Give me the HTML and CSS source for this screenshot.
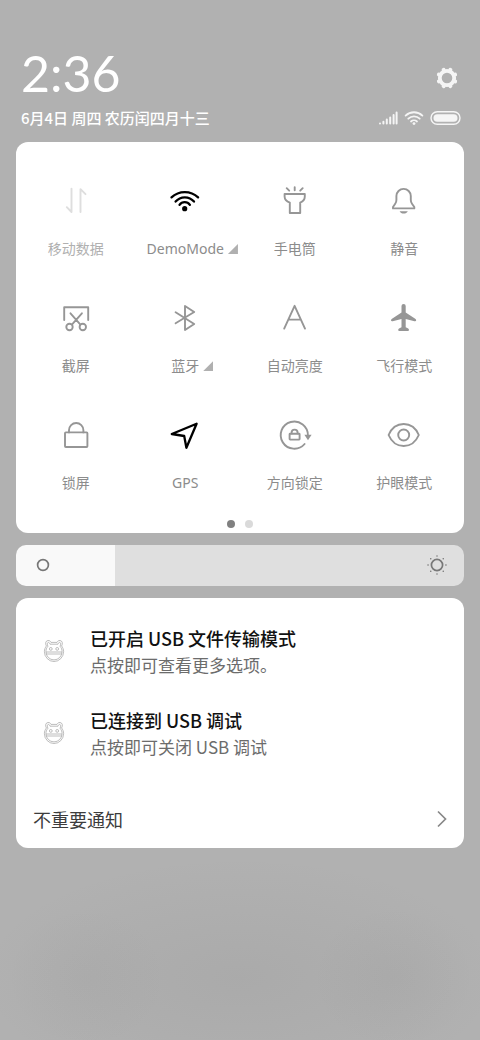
FILE: index.html
```html
<!DOCTYPE html>
<html lang="zh-CN">
<head>
<meta charset="utf-8">
<meta name="viewport" content="width=device-width, initial-scale=1">
<title>控制中心</title>
<link rel="stylesheet" href="styles.css">
</head>
<body>
<main class="shade">
  <header class="header">
    <div class="header-row">
      <time class="clock">2:36</time>
      <button class="settings" type="button" aria-label="设置">
        <svg width="24" height="24" viewBox="0 0 24 24" fill="none" stroke="#f5f5f5">
          <circle cx="12" cy="12" r="7.2" stroke-width="3.8"/>
          <g stroke-width="4" stroke-linecap="round" transform="rotate(22.5 12 12)">
            <path d="M12 3.2v1M12 19.8v1M3.2 12h1M19.8 12h1M5.8 5.8l.7.7M17.5 17.5l.7.7M5.8 18.2l.7-.7M17.5 6.5l.7-.7"/>
          </g>
        </svg>
      </button>
    </div>
    <div class="header-row">
      <p class="date">6月4日 周四 农历闰四月十三</p>
      <div class="status">
        <svg width="20" height="16" viewBox="0 0 20 16" stroke="#f5f5f5" stroke-width="2" stroke-linecap="round">
          <path d="M2 13.6v-.1M5.4 13.6v-1.8M8.8 13.6V9.6M12.2 13.6V7.4M15.6 13.6V5M18.6 13.6V2.6"/>
        </svg>
        <svg width="20" height="16" viewBox="0 0 20 16" fill="none" stroke="#f5f5f5" stroke-width="1.8" stroke-linecap="round">
          <path d="M1.6 5.6a12.2 12.2 0 0 1 16.8 0M4.3 8.7a8.2 8.2 0 0 1 11.4 0M7 11.5a4.4 4.4 0 0 1 6 0"/>
          <circle cx="10" cy="13.6" r="1.4" fill="#f5f5f5" stroke="none"/>
        </svg>
        <svg width="31" height="16" viewBox="0 0 31 16">
          <rect x="1" y="1.7" width="29" height="12.6" rx="6.3" fill="none" stroke="#f5f5f5" stroke-width="1.4"/>
          <rect x="3.5" y="4.2" width="24" height="7.6" rx="3.8" fill="#f5f5f5"/>
        </svg>
      </div>
    </div>
  </header>

  <section class="card toggles" aria-label="快捷开关">
    <div class="toggle-grid">
      <button class="toggle disabled" type="button">
        <svg class="icon" viewBox="0 0 36 36"><path d="M8.8 24.2l4.7 4.8V5.6M22.5 29V6.2l5 5"/></svg>
        <span class="label"><span class="name">移动数据</span></span>
      </button>
      <button class="toggle on" type="button">
        <svg class="icon" viewBox="0 0 36 36"><path d="M4.5 14.4a19.3 19.3 0 0 1 26.6 0M8.6 18.6a12 12 0 0 1 18.4 0M12.5 21.8a6.4 6.4 0 0 1 10.4 0" stroke-width="2.3"/><circle class="solid" cx="17.7" cy="25.7" r="2.6"/></svg>
        <span class="label"><span class="name">DemoMode</span><span class="more"></span></span>
      </button>
      <button class="toggle" type="button">
        <svg class="icon" viewBox="0 0 36 36"><path d="M7.6 11h20.2v2.4c0 3-1.4 4.8-4.6 6.2V30H12.8V19.6C9.2 18.200 7.600 16.400 7.600 13.400zM17.700 4.200v3M9.700 5.200l2.500 2.500M25.700 5.200l-2.500 2.500"/></svg>
        <span class="label"><span class="name">手电筒</span></span>
      </button>
      <button class="toggle" type="button">
        <svg class="icon" viewBox="0 0 36 36"><path d="M7 25.400V24l2.200-3.200c.9-1.300 1.200-2.200 1.200-3.700v-4a7.200 7.200 0 0 1 14.400 0v4c0 1.500.3 2.400 1.200 3.700l2.300 3.200v1.400z"/><path class="solid" d="M13.600 28.200h8.200c-.8 1.600-2.200 2.400-4.100 2.400s-3.300-.8-4.100-2.400z"/></svg>
        <span class="label"><span class="name">静音</span></span>
      </button>

      <button class="toggle" type="button">
        <svg class="icon" viewBox="0 0 36 36"><path d="M6.200 20V7.200h24V20M12.500 13.300l9.700 11M23.900 13.300l-9.800 11"/><circle cx="11.500" cy="27" r="3.200"/><circle cx="24.800" cy="27" r="3.200"/></svg>
        <span class="label"><span class="name">截屏</span></span>
      </button>
      <button class="toggle" type="button">
        <svg class="icon" viewBox="0 0 36 36"><path d="M8.600 12.200L27.200 24 18 30V6l9.200 6L8.600 23.200"/></svg>
        <span class="label"><span class="name">蓝牙</span><span class="more"></span></span>
      </button>
      <button class="toggle" type="button">
        <svg class="icon" viewBox="0 0 36 36"><path d="M7.200 28.600L17.600 5.800 28 28.600M11.400 19.600h12.400"/></svg>
        <span class="label"><span class="name">自动亮度</span></span>
      </button>
      <button class="toggle" type="button">
        <svg class="icon" viewBox="0 0 36 36"><path class="solid" d="M15.500 6a2.100 2.100 0 0 1 4.200 0v6.400l9.500 6.300c1.600 1.100 1.200 3-.7 2.500l-8.800-2.300v8.300l2.500 1.300c1.100.7 1.100 2.500-.3 2.500h-8.600c-1.400 0-1.400-1.800-.3-2.500l2.500-1.300v-8.300l-8.800 2.300c-1.900.5-2.300-1.400-.7-2.500l9.500-6.300z"/></svg>
        <span class="label"><span class="name">飞行模式</span></span>
      </button>

      <button class="toggle" type="button">
        <svg class="icon" viewBox="0 0 36 36"><rect x="7" y="15.400" width="22.400" height="14.600" rx=".8"/><path d="M11 15.400v-2.200a7.200 7.200 0 0 1 14.400 0v2.200"/></svg>
        <span class="label"><span class="name">锁屏</span></span>
      </button>
      <button class="toggle on" type="button">
        <svg class="icon" viewBox="0 0 36 36"><path d="M4.800 17L29.600 6.800 19.400 30.800 17.200 19z" stroke-width="2.300"/></svg>
        <span class="label"><span class="name">GPS</span></span>
      </button>
      <button class="toggle" type="button">
        <svg class="icon" viewBox="0 0 36 36"><path d="M30.900 18.500A13.600 13.600 0 1 0 27.600 27"/><path class="solid" d="M27.400 17.800h7.200l-3.600 5.400z"/><rect x="12.600" y="16.800" width="10" height="5.800" rx=".5"/><path d="M14.600 16.400v-.8a3 3 0 0 1 6 0v.8"/></svg>
        <span class="label"><span class="name">方向锁定</span></span>
      </button>
      <button class="toggle" type="button">
        <svg class="icon" viewBox="0 0 36 36"><path d="M2.600 18C5.600 11 11 7 17.700 7s12.100 4 15.100 11c-3 7-8.400 11-15.100 11S5.600 25 2.600 18z"/><circle cx="17.700" cy="18" r="5.500"/></svg>
        <span class="label"><span class="name">护眼模式</span></span>
      </button>
    </div>
    <div class="pager"><span class="dot current"></span><span class="dot"></span></div>
  </section>

  <div class="brightness">
    <input class="slider" type="range" min="0" max="100" value="22" aria-label="亮度" style="--level: 22%">
    <svg class="level-icon low" viewBox="0 0 24 24"><circle cx="12" cy="12" r="5.400"/></svg>
    <svg class="level-icon high" viewBox="0 0 24 24"><circle cx="12" cy="12" r="5.600"/><path stroke-linecap="round" stroke-width="1.500" d="M12 3v.1M12 20.900v.1M3 12h.1M20.900 12h.1M5.700 5.700h.1M18.200 5.700h.1M5.700 18.200h.1M18.200 18.200h.1"/></svg>
  </div>

  <section class="card notices" aria-label="通知">
    <ul class="notice-list">
      <li class="notice">
        <svg class="bear" viewBox="0 0 24 24"><path d="M4.400 7C3 4.500 3.600 1.700 6 1.500c1.500-.1 2.500.7 3 1.900h6c.5-1.200 1.500-2 3-1.900 2.400.2 3 3 1.600 5.500 1.300 1.700 2 3.600 2 5.600a9.600 9.900 0 0 1-19.200 0c0-2 .7-3.900 2-5.600z"/><path d="M5.900 7.300C5 5 5.300 3.500 6.400 3.400c.9 0 1.300.8 1.600 1.800h8c.3-1 .7-1.800 1.600-1.800 1.100.1 1.400 1.600.5 3.900 1.300 1.500 2 3.300 2 5.300a8.100 8.300 0 0 1-16.200 0c0-2 .7-3.800 2-5.300zM4 13h16M4.200 15h15.600"/><circle cx="8.800" cy="9.900" r="1.400"/><circle cx="15.200" cy="9.900" r="1.400"/></svg>
        <div class="notice-text">
          <h2 class="title">已开启 USB 文件传输模式</h2>
          <p class="detail">点按即可查看更多选项。</p>
        </div>
      </li>
      <li class="notice">
        <svg class="bear" viewBox="0 0 24 24"><path d="M4.400 7C3 4.500 3.600 1.700 6 1.500c1.500-.1 2.500.7 3 1.900h6c.5-1.200 1.500-2 3-1.900 2.400.2 3 3 1.600 5.500 1.300 1.700 2 3.600 2 5.600a9.600 9.900 0 0 1-19.200 0c0-2 .7-3.900 2-5.600z"/><path d="M5.900 7.300C5 5 5.300 3.500 6.400 3.400c.9 0 1.300.8 1.600 1.800h8c.3-1 .7-1.800 1.600-1.800 1.100.1 1.400 1.600.5 3.900 1.300 1.500 2 3.300 2 5.300a8.100 8.300 0 0 1-16.200 0c0-2 .7-3.800 2-5.300zM4 13h16M4.200 15h15.600"/><circle cx="8.800" cy="9.900" r="1.400"/><circle cx="15.200" cy="9.900" r="1.400"/></svg>
        <div class="notice-text">
          <h2 class="title">已连接到 USB 调试</h2>
          <p class="detail">点按即可关闭 USB 调试</p>
        </div>
      </li>
    </ul>
    <button class="unimportant" type="button">
      <span>不重要通知</span>
      <svg width="10" height="18" viewBox="0 0 10 18" fill="none" stroke="#888" stroke-width="1.700"><path d="M1 1.500L8.500 9 1 16.500"/></svg>
    </button>
  </section>
</main>
</body>
</html>
```
FILE: styles.css
```css
* {
  box-sizing: border-box;
}

body {
  margin: 0;
  min-height: 100vh;
  font-family: "Noto Sans CJK SC", sans-serif;
  background:
    radial-gradient(ellipse 80px 70px at 18% 94%, rgba(90, 90, 90, 0.04), transparent),
    radial-gradient(ellipse 80px 70px at 82% 94%, rgba(90, 90, 90, 0.05), transparent),
    radial-gradient(ellipse 260px 120px at 50% 94%, rgba(90, 90, 90, 0.08), transparent),
    #b1b1b1;
}

button {
  margin: 0;
  padding: 0;
  border: 0;
  background: none;
  font: inherit;
  color: inherit;
  cursor: pointer;
}

svg {
  display: block;
  flex: none;
}

.shade {
  display: flex;
  flex-direction: column;
  gap: 12px;
  padding: 44px 16px 16px;
}

.header {
  display: flex;
  flex-direction: column;
  gap: 4px;
  padding: 0 3px 0 5px;
}

.header-row {
  display: flex;
  align-items: center;
  justify-content: space-between;
}

.clock {
  font-family: Lato, sans-serif;
  font-weight: 400;
  font-size: 50px;
  line-height: 58px;
  color: #fff;
}

.settings {
  padding: 10px 2px 0 0;
}

.date {
  margin: 0;
  font-size: 15px;
  font-weight: 500;
  line-height: 24px;
  color: #fff;
}

.status {
  display: flex;
  gap: 6px;
}

.card {
  border-radius: 12px;
  background: #fff;
}

.toggles {
  padding: 41px 5px 5px;
}

.toggle-grid {
  display: grid;
  grid-template-columns: repeat(4, 1fr);
  row-gap: 41px;
}

.toggle {
  display: flex;
  flex-direction: column;
  align-items: center;
  gap: 20px;
  color: #969696;
}

.toggle.on {
  color: #000;
}

.toggle.disabled {
  color: #dedede;
}

.icon {
  width: 36px;
  height: 36px;
  fill: none;
  stroke: currentColor;
  stroke-width: 1.9px;
  stroke-linecap: round;
  stroke-linejoin: round;
}

.icon .solid {
  fill: currentColor;
  stroke: none;
}

.label {
  display: grid;
  grid-template-columns: 1fr auto 1fr;
  align-items: center;
  align-self: stretch;
  font-family: "Noto Sans", "Noto Sans CJK SC", sans-serif;
  font-size: 14px;
  line-height: 20px;
  color: #8c8c8c;
}

.name {
  grid-column: 2;
}

.disabled .label {
  color: #b0b0b0;
}

.more {
  width: 10px;
  height: 10px;
  margin-left: 4px;
  background: #b0b0b0;
  clip-path: polygon(100% 0, 100% 100%, 0 100%);
}

.pager {
  display: flex;
  justify-content: center;
  gap: 10px;
  margin-top: 27px;
}

.dot {
  width: 8px;
  height: 8px;
  border-radius: 50%;
  background: #dadada;
}

.dot.current {
  background: #808080;
}

.brightness {
  position: relative;
  display: flex;
}

.slider {
  appearance: none;
  width: 100%;
  height: 41px;
  margin: 0;
  border-radius: 10px;
  background: linear-gradient(to right, #f9f9f9 var(--level), #dfdfdf var(--level));
}

.slider::-webkit-slider-thumb {
  appearance: none;
  width: 1px;
  height: 41px;
  background: transparent;
}

.level-icon {
  position: absolute;
  top: 8px;
  width: 24px;
  height: 24px;
  fill: none;
  stroke: #777;
  stroke-width: 1.7px;
  pointer-events: none;
}

.level-icon.low {
  left: 15px;
}

.level-icon.high {
  right: 15px;
}

.notice-list {
  margin: 0;
  padding: 12px 0 16px;
  list-style: none;
}

.notice {
  display: flex;
  align-items: center;
  gap: 24px;
  padding: 14px 26px;
}

.bear {
  width: 24px;
  height: 24px;
  fill: none;
  stroke: #a0a0a0;
  stroke-width: 0.7px;
}

.title {
  margin: 0;
  font-size: 18px;
  font-weight: 500;
  line-height: 28px;
  color: #111;
}

.detail {
  margin: 0;
  font-size: 17px;
  line-height: 26px;
  color: #6c6c6c;
}

.unimportant {
  display: flex;
  align-items: center;
  justify-content: space-between;
  width: 100%;
  padding: 15px 17px;
  font-size: 18px;
  line-height: 28px;
  color: #3c3c3c;
}
```
